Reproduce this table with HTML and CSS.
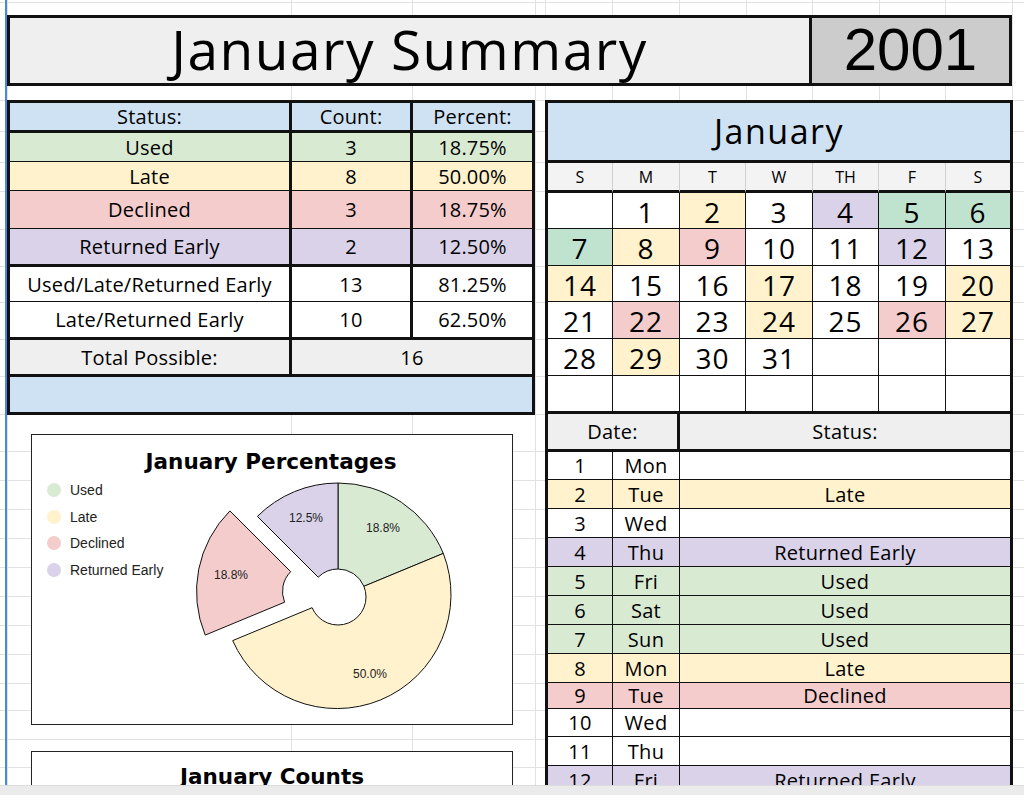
FILE: index.html
```html
<!DOCTYPE html>
<html lang="en">
<head>
<meta charset="utf-8">
<title>January Summary 2001</title>
<link rel="stylesheet" href="styles.css">
</head>
<body>
<div class="sheet">
  <header class="title-bar">
    <div class="title">January Summary</div>
    <div class="year">2001</div>
  </header>

  <div class="content">
    <div class="left-col">
      <div class="summary">
        <div class="c blue tb">Status:</div>
        <div class="c blue tb">Count:</div>
        <div class="c blue tb end">Percent:</div>

        <div class="c green">Used</div>
        <div class="c green">3</div>
        <div class="c green end">18.75%</div>

        <div class="c yellow">Late</div>
        <div class="c yellow">8</div>
        <div class="c yellow end">50.00%</div>

        <div class="c red">Declined</div>
        <div class="c red">3</div>
        <div class="c red end">18.75%</div>

        <div class="c purple tb">Returned Early</div>
        <div class="c purple tb">2</div>
        <div class="c purple tb end">12.50%</div>

        <div class="c">Used/Late/Returned Early</div>
        <div class="c">13</div>
        <div class="c end">81.25%</div>

        <div class="c tb">Late/Returned Early</div>
        <div class="c tb">10</div>
        <div class="c tb end">62.50%</div>

        <div class="c gray tb">Total Possible:</div>
        <div class="c gray tb end span2">16</div>

        <div class="c blue nb end span3"></div>
      </div>

      <section class="chart chart-pct">
        <svg class="pie" width="480" height="289" viewBox="0 0 480 289">
          <text class="chart-title" x="239" y="34" text-anchor="middle">January Percentages</text>

          <circle cx="22" cy="55" r="7" class="f-used"/>
          <text class="legend" x="38" y="60">Used</text>
          <circle cx="22" cy="82" r="7" class="f-late"/>
          <text class="legend" x="38" y="87">Late</text>
          <circle cx="22" cy="108" r="7" class="f-declined"/>
          <text class="legend" x="38" y="113">Declined</text>
          <circle cx="22" cy="135" r="7" class="f-returned"/>
          <text class="legend" x="38" y="140">Returned Early</text>

          <path class="slice f-used" d="M306,48 A114,114 0 0 1 411.3,118.4 L331.9,151.3 A28,28 0 0 0 306,134 Z"/>
          <path class="slice f-late" d="M411.3,118.4 A114,114 0 0 1 200.7,205.6 L280.1,172.7 A28,28 0 0 0 331.9,151.3 Z"/>
          <path class="slice f-declined" d="M173.2,200.1 A114,114 0 0 1 197.9,75.9 L258.7,136.7 A28,28 0 0 0 252.6,167.2 Z"/>
          <path class="slice f-returned" d="M225.4,81.4 A114,114 0 0 1 306,48 L306,134 A28,28 0 0 0 286.2,142.2 Z"/>

          <text class="lbl" x="351" y="97" text-anchor="middle">18.8%</text>
          <text class="lbl" x="274" y="87" text-anchor="middle">12.5%</text>
          <text class="lbl" x="199" y="144" text-anchor="middle">18.8%</text>
          <text class="lbl" x="338" y="243" text-anchor="middle">50.0%</text>
        </svg>
      </section>

      <section class="chart chart-counts">
        <h2 class="counts-title">January Counts</h2>
      </section>
    </div>

    <div class="right-col">
      <div class="calendar">
        <div class="k month tb">January</div>

        <div class="k dow">S</div>
        <div class="k dow">M</div>
        <div class="k dow">T</div>
        <div class="k dow">W</div>
        <div class="k dow">TH</div>
        <div class="k dow">F</div>
        <div class="k dow end">S</div>

        <div class="k d"></div>
        <div class="k d">1</div>
        <div class="k d yellow">2</div>
        <div class="k d">3</div>
        <div class="k d purple">4</div>
        <div class="k d mint">5</div>
        <div class="k d mint end">6</div>

        <div class="k d mint">7</div>
        <div class="k d yellow">8</div>
        <div class="k d red">9</div>
        <div class="k d">10</div>
        <div class="k d">11</div>
        <div class="k d purple">12</div>
        <div class="k d end">13</div>

        <div class="k d yellow">14</div>
        <div class="k d">15</div>
        <div class="k d">16</div>
        <div class="k d yellow">17</div>
        <div class="k d">18</div>
        <div class="k d">19</div>
        <div class="k d yellow end">20</div>

        <div class="k d">21</div>
        <div class="k d red">22</div>
        <div class="k d">23</div>
        <div class="k d yellow">24</div>
        <div class="k d">25</div>
        <div class="k d red">26</div>
        <div class="k d yellow end">27</div>

        <div class="k d">28</div>
        <div class="k d yellow">29</div>
        <div class="k d">30</div>
        <div class="k d">31</div>
        <div class="k d"></div>
        <div class="k d"></div>
        <div class="k d end"></div>

        <div class="k d tb"></div>
        <div class="k d tb"></div>
        <div class="k d tb"></div>
        <div class="k d tb"></div>
        <div class="k d tb"></div>
        <div class="k d tb"></div>
        <div class="k d tb end"></div>

        <div class="k lh gray tb thick-r span-date">Date:</div>
        <div class="k lh gray tb end span-status">Status:</div>

        <div class="k l">1</div><div class="k l">Mon</div><div class="k l end span-status"></div>
        <div class="k l yellow">2</div><div class="k l yellow">Tue</div><div class="k l yellow end span-status">Late</div>
        <div class="k l">3</div><div class="k l">Wed</div><div class="k l end span-status"></div>
        <div class="k l purple">4</div><div class="k l purple">Thu</div><div class="k l purple end span-status">Returned Early</div>
        <div class="k l green">5</div><div class="k l green">Fri</div><div class="k l green end span-status">Used</div>
        <div class="k l green">6</div><div class="k l green">Sat</div><div class="k l green end span-status">Used</div>
        <div class="k l green">7</div><div class="k l green">Sun</div><div class="k l green end span-status">Used</div>
        <div class="k l yellow">8</div><div class="k l yellow">Mon</div><div class="k l yellow end span-status">Late</div>
        <div class="k l red">9</div><div class="k l red">Tue</div><div class="k l red end span-status">Declined</div>
        <div class="k l">10</div><div class="k l">Wed</div><div class="k l end span-status"></div>
        <div class="k l">11</div><div class="k l">Thu</div><div class="k l end span-status"></div>
        <div class="k l purple">12</div><div class="k l purple">Fri</div><div class="k l purple end span-status">Returned Early</div>
        <div class="k l">13</div><div class="k l">Sat</div><div class="k l end span-status"></div>
      </div>
    </div>
  </div>
</div>
<div class="hbar"></div>
</body>
</html>
```

FILE: styles.css
```css
:root {
  --grid: #e2e2e2;
  --blue: #cfe2f3;
  --green: #d9ead3;
  --mint: #bfe3cf;
  --yellow: #fff2cc;
  --red: #f4cccc;
  --purple: #d9d2e9;
  --gray: #efefef;
  --line: #111;
}

* { box-sizing: border-box; }

html, body {
  margin: 0;
  padding: 0;
  background: #fff;
}

body {
  width: 1024px;
  height: 795px;
  overflow: hidden;
  font-family: "Open Sans", "Noto Sans", sans-serif;
  font-weight: 500;
  color: #000;
}

/* spreadsheet canvas with faint gridlines */
.sheet {
  height: 785px;
  overflow: hidden;
  padding: 15px 0 0 7px;
  background-color: #fff;
  background-repeat: no-repeat;
  background-image:
    linear-gradient(#4a86e8, #4a86e8),
    linear-gradient(var(--grid), var(--grid)),
    linear-gradient(var(--grid), var(--grid)),
    linear-gradient(var(--grid), var(--grid)),
    linear-gradient(var(--grid), var(--grid)),
    linear-gradient(var(--grid), var(--grid)),
    linear-gradient(var(--grid), var(--grid)),
    linear-gradient(var(--grid), var(--grid)),
    linear-gradient(var(--grid), var(--grid)),
    linear-gradient(var(--grid), var(--grid)),
    linear-gradient(var(--grid), var(--grid)),
    linear-gradient(var(--grid), var(--grid)),
    linear-gradient(var(--grid), var(--grid)),
    linear-gradient(var(--grid), var(--grid)),
    linear-gradient(var(--grid), var(--grid)),
    linear-gradient(var(--grid), var(--grid)),
    linear-gradient(var(--grid), var(--grid)),
    linear-gradient(var(--grid), var(--grid)),
    linear-gradient(var(--grid), var(--grid)),
    linear-gradient(var(--grid), var(--grid)),
    linear-gradient(var(--grid), var(--grid)),
    linear-gradient(var(--grid), var(--grid)),
    linear-gradient(var(--grid), var(--grid)),
    linear-gradient(var(--grid), var(--grid)),
    linear-gradient(var(--grid), var(--grid)),
    linear-gradient(var(--grid), var(--grid)),
    linear-gradient(var(--grid), var(--grid)),
    linear-gradient(var(--grid), var(--grid)),
    linear-gradient(var(--grid), var(--grid)),
    linear-gradient(var(--grid), var(--grid)),
    linear-gradient(var(--grid), var(--grid)),
    linear-gradient(var(--grid), var(--grid)),
    linear-gradient(var(--grid), var(--grid)),
    linear-gradient(var(--grid), var(--grid)),
    linear-gradient(var(--grid), var(--grid)),
    linear-gradient(var(--grid), var(--grid));
  background-position:
    5px 0,
    7px 0, 291px 0, 412px 0, 535px 0, 545px 0, 612px 0, 679px 0,
    746px 0, 812px 0, 879px 0, 945px 0, 1012px 0,
    0 2px, 0 100px, 0 131px, 0 162px, 0 191px, 0 229px, 0 266px,
    0 302px, 0 339px, 0 376px, 0 414px, 0 451px, 0 480px, 0 509px,
    0 538px, 0 567px, 0 596px, 0 625px, 0 654px, 0 683px, 0 710px,
    0 739px, 0 767px;
  background-size:
    2px 100%,
    1px 100%, 1px 100%, 1px 100%, 1px 100%, 1px 100%, 1px 100%, 1px 100%,
    1px 100%, 1px 100%, 1px 100%, 1px 100%, 1px 100%,
    100% 1px, 100% 1px, 100% 1px, 100% 1px, 100% 1px, 100% 1px, 100% 1px,
    100% 1px, 100% 1px, 100% 1px, 100% 1px, 100% 1px, 100% 1px, 100% 1px,
    100% 1px, 100% 1px, 100% 1px, 100% 1px, 100% 1px, 100% 1px, 100% 1px,
    100% 1px, 100% 1px;
}

/* ---------- Title ---------- */
.title-bar {
  display: flex;
  width: 1005px;
  height: 71px;
  border: 3px solid var(--line);
}

.title {
  flex: 1;
  display: flex;
  align-items: center;
  justify-content: center;
  background: var(--gray);
  font-size: 55px;
  letter-spacing: 1.5px;
  padding-bottom: 4px;
}

.year {
  width: 200px;
  display: flex;
  align-items: center;
  justify-content: center;
  background: #cccccc;
  border-left: 3px solid var(--line);
  font-family: "Liberation Sans", Arial, sans-serif;
  font-weight: 400;
  font-size: 60px;
  padding-bottom: 2px;
}

/* ---------- Layout ---------- */
.content {
  display: flex;
  gap: 10px;
  margin-top: 14px;
  align-items: flex-start;
}

.left-col {
  width: 528px;
  display: flex;
  flex-direction: column;
}

.right-col {
  width: 468px;
}

/* ---------- Summary table ---------- */
.summary {
  display: grid;
  grid-template-columns: 282px 121px 119px;
  grid-template-rows: 30px 29px 29px 38px 38px 35px 38px 37px 35px;
  width: 528px;
  border: 3px solid var(--line);
  background: #fff;
}

.c {
  display: flex;
  align-items: center;
  justify-content: center;
  border-right: 3px solid var(--line);
  border-bottom: 1px solid var(--line);
  font-size: 20px;
  letter-spacing: 0.2px;
  white-space: nowrap;
  overflow: hidden;
}

.c.end, .k.end { border-right: 0; }
.c.tb, .k.tb { border-bottom-width: 3px; }
.c.nb { border-bottom: 0; }
.span2 { grid-column: span 2; }
.span3 { grid-column: span 3; }

.blue { background: var(--blue); }
.green { background: var(--green); }
.mint { background: var(--mint); }
.yellow { background: var(--yellow); }
.red { background: var(--red); }
.purple { background: var(--purple); }
.gray { background: var(--gray); }

/* ---------- Charts ---------- */
.chart {
  background: #fff;
  border: 1px solid #222;
  width: 482px;
  margin-left: 24px;
}

.chart-pct {
  height: 291px;
  margin-top: 19px;
}

.pie { display: block; }

.chart-title {
  font-family: "DejaVu Sans", Verdana, sans-serif;
  font-weight: bold;
  font-size: 21.5px;
  fill: #000;
}

.legend {
  font-family: "Liberation Sans", Arial, sans-serif;
  font-weight: 400;
  font-size: 14px;
  fill: #222;
}

.lbl {
  font-family: "Liberation Sans", Arial, sans-serif;
  font-weight: 400;
  font-size: 12px;
  fill: #222;
}

.slice {
  stroke: #111;
  stroke-width: 1;
}

.f-used { fill: var(--green); }
.f-late { fill: var(--yellow); }
.f-declined { fill: var(--red); }
.f-returned { fill: var(--purple); }

.chart-counts {
  height: 120px;
  margin-top: 26px;
  padding-top: 12px;
}

.counts-title {
  margin: 0;
  text-align: center;
  font-family: "DejaVu Sans", Verdana, sans-serif;
  font-weight: bold;
  font-size: 21.5px;
  line-height: 26px;
}

/* ---------- Calendar + log ---------- */
.calendar {
  display: grid;
  grid-template-columns: 65px 67px 66px 67px 66px 67px 64px;
  grid-template-rows:
    60px 30px 36px 37px 36px 37px 37px 38px 38px
    28px 29px 29px 29px 29px 29px 29px 29px 26px 28px 29px 29px 29px;
  width: 468px;
  border: 3px solid var(--line);
  border-bottom: 0;
  background: #fff;
}

.k {
  display: flex;
  align-items: center;
  justify-content: center;
  border-right: 1px solid var(--line);
  border-bottom: 1px solid var(--line);
  white-space: nowrap;
  overflow: hidden;
}

.month {
  grid-column: span 7;
  border-right: 0;
  background: var(--blue);
  font-size: 34px;
  letter-spacing: 1.5px;
  padding-bottom: 2px;
}

.dow {
  background: #f3f3f3;
  border-right-color: #cfcfcf;
  border-bottom: 3px solid var(--line);
  font-size: 16px;
}

.dow.end { border-right: 0; }

.d {
  font-size: 28px;
  letter-spacing: 1px;
  padding-top: 2px;
}

.lh {
  font-size: 20px;
  letter-spacing: 0.3px;
}

.thick-r { border-right-width: 3px; }
.span-date { grid-column: span 2; }
.span-status { grid-column: span 5; }

.l {
  font-size: 20px;
  letter-spacing: 0.3px;
}

/* ---------- bottom scroll bar ---------- */
.hbar {
  height: 10px;
  background: #ebebeb;
  border-top: 1px solid #dcdcdc;
}
```
